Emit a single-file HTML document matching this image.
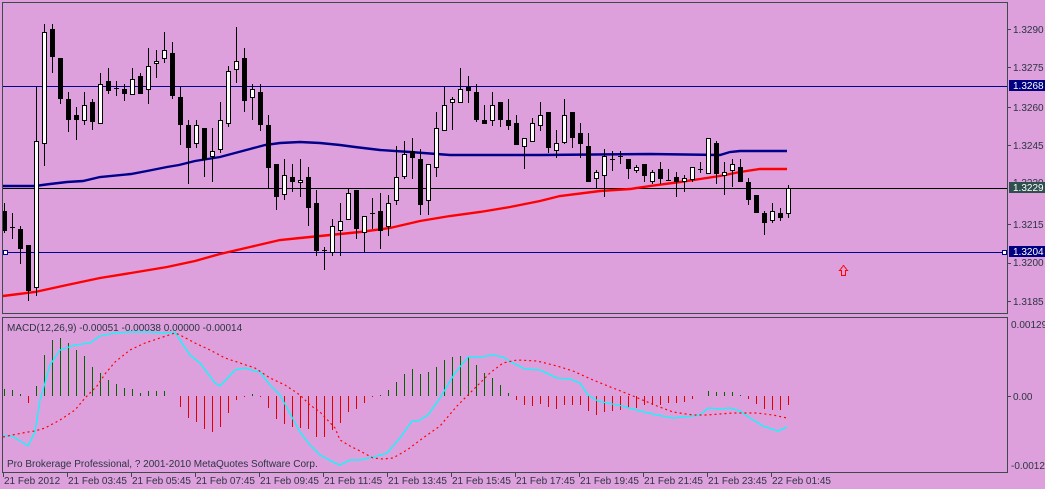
<!DOCTYPE html>
<html><head><meta charset="utf-8">
<style>
html,body{margin:0;padding:0;background:#DDA0DD;width:1045px;height:489px;overflow:hidden}
svg{display:block}
text{font-family:"Liberation Sans",sans-serif;font-size:10px;fill:#2b3540}
</style></head><body>
<svg id="s" width="1045" height="489" xmlns="http://www.w3.org/2000/svg" shape-rendering="crispEdges">
<rect width="1045" height="489" fill="#DDA0DD"/>
<g id="g"></g>
<rect x="2.5" y="2.5" width="1005" height="311" fill="none" stroke="#3c4a4a"/>
<rect x="2.5" y="317.5" width="1005" height="155" fill="none" stroke="#3c4a4a"/>
<g stroke="#3c4a4a">
<line x1="1008" y1="29.5" x2="1011" y2="29.5"/><line x1="1008" y1="67.5" x2="1011" y2="67.5"/>
<line x1="1008" y1="107.5" x2="1011" y2="107.5"/><line x1="1008" y1="145.5" x2="1011" y2="145.5"/>
<line x1="1008" y1="224.5" x2="1011" y2="224.5"/><line x1="1008" y1="263.5" x2="1011" y2="263.5"/>
<line x1="1008" y1="301.5" x2="1011" y2="301.5"/><line x1="1008" y1="396.5" x2="1011" y2="396.5"/>
</g>
<text x="1013" y="33">1.3290</text>
<text x="1013" y="71">1.3275</text>
<text x="1013" y="111">1.3260</text>
<text x="1013" y="149">1.3245</text>
<text x="1013" y="186">1.3230</text>
<text x="1013" y="228">1.3215</text>
<text x="1013" y="266">1.3200</text>
<text x="1013" y="305">1.3185</text>
<rect x="1009" y="80" width="36" height="11" fill="#000080"/>
<text x="1013" y="89" style="fill:#fff">1.3268</text>
<rect x="1009" y="182" width="36" height="11" fill="#2f4f4f"/>
<text x="1013" y="191" style="fill:#fff">1.3229</text>
<rect x="1009" y="246" width="36" height="11" fill="#000080"/>
<text x="1013" y="255" style="fill:#fff">1.3204</text>
<text x="1011" y="328">0.00129</text>
<text x="1013" y="400">0.00</text>
<text x="1011" y="469">-0.00125</text>
<text x="7" y="331">MACD(12,26,9) -0.00051 -0.00038 0.00000 -0.00014</text>
<text x="7" y="467">Pro Brokerage Professional, ? 2001-2010 MetaQuotes Software Corp.</text>
<g id="ax"></g>
</svg>
<script>
var NS="http://www.w3.org/2000/svg",g=document.getElementById('g'),ax=document.getElementById('ax');
function el(p,t,a){var e=document.createElementNS(NS,t);for(var k in a)e.setAttribute(k,a[k]);p.appendChild(e);return e;}
var lab=["21 Feb 2012","21 Feb 03:45","21 Feb 05:45","21 Feb 07:45","21 Feb 09:45","21 Feb 11:45","21 Feb 13:45","21 Feb 15:45","21 Feb 17:45","21 Feb 19:45","21 Feb 21:45","21 Feb 23:45","22 Feb 01:45"];
for(var i=0;i<13;i++){var x=3+64*i;el(ax,'line',{x1:x+.5,y1:473,x2:x+.5,y2:477,stroke:'#3c4a4a'});var t=el(ax,'text',{x:x+1,y:484});t.textContent=lab[i];}
el(g,'line',{x1:3,y1:86.5,x2:1007,y2:86.5,stroke:'#000090'});
el(g,'line',{x1:3,y1:188.5,x2:1007,y2:188.5,stroke:'#000'});
el(g,'line',{x1:3,y1:252.5,x2:1007,y2:252.5,stroke:'#000090'});
el(g,'rect',{x:3.5,y:250.5,width:4,height:4,fill:'#fff',stroke:'#000090'});
el(g,'rect',{x:1002.5,y:250.5,width:4,height:4,fill:'#fff',stroke:'#000090'});
el(g,'polyline',{points:"3,186 35,186 50,184 67,182 83,181 100,177 131,174 147,171 167,167 179,165 195,161 220,157 235,153 250,149 265,145 280,143 300,142 320,143 340,145 355,147 380,150 410,152 450,155 540,155 650,154 720,155 730,152 740,151 787,151",fill:'none',stroke:'#00008b','stroke-width':2.4,'shape-rendering':'auto'});
el(g,'polyline',{points:"3,296 35,292 67,285 100,278 131,273 167,267 195,261 220,254 250,247 280,240 300,238 330,235 360,232 390,228 420,221 450,216 480,212 510,207 540,201 560,196 600,191 630,189 650,186 680,182 700,179 720,176 740,172 760,169 787,169",fill:'none',stroke:'#f00','stroke-width':2.4,'shape-rendering':'auto'});
var C=[[211,230,203,232,'b'],[227,227,213,238,'d'],[229,248,226,263,'b'],[245,290,245,300,'b'],[141,287,87,295,'w'],[32,143,24,165,'w'],[29,56,24,72,'b'],[58,98,58,103,'b'],[99,119,92,131,'b'],[115,119,107,139,'b'],
[105,120,92,124,'w'],[102,121,99,129,'b'],[84,123,73,123,'w'],[81,90,68,93,'b'],[88,88,81,95,'d'],[89,93,84,100,'b'],[79,94,68,94,'w'],[76,93,73,93,'b'],[66,89,48,103,'w'],[61,63,50,77,'w'],
[50,58,32,62,'w'],[53,95,42,98,'b'],[97,124,87,144,'b'],[125,147,120,183,'b'],[125,143,120,147,'w'],[128,159,128,176,'b'],[151,156,128,181,'w'],[120,149,102,152,'w'],[71,123,66,126,'w'],[61,69,27,82,'w'],
[58,100,48,111,'b'],[89,97,84,119,'w'],[92,124,84,130,'b'],[125,167,115,188,'b'],[164,196,164,209,'b'],[175,194,159,199,'w'],[177,181,164,191,'b'],[180,182,159,196,'w'],[177,207,167,225,'b'],[203,250,190,255,'b'],
[250,250,247,269,'d'],[226,252,219,255,'w'],[221,230,203,255,'w'],[193,219,189,219,'w'],[190,228,190,238,'b'],[216,232,216,251,'w'],[213,213,198,228,'d'],[211,230,193,248,'b'],[203,226,195,235,'w'],[177,200,146,204,'w'],
[154,176,141,178,'w'],[151,157,138,178,'b'],[159,204,149,214,'b'],[164,200,164,214,'w'],[128,167,112,176,'w'],[105,130,87,130,'w'],[99,102,97,129,'w'],[89,102,68,102,'w'],[87,90,76,102,'b'],[92,119,84,121,'b'],
[120,123,105,123,'b'],[105,120,92,125,'w'],[102,119,102,126,'b'],[120,125,99,129,'b'],[123,144,115,144,'b'],[138,146,138,168,'w'],[123,141,118,141,'w'],[115,125,102,130,'w'],[112,147,112,152,'b'],[143,150,130,157,'w'],
[115,142,99,143,'w'],[112,137,112,147,'b'],[133,143,123,157,'b'],[146,181,133,181,'b'],[172,178,170,188,'w'],[156,175,149,196,'w'],[159,159,151,170,'d'],[156,156,151,163,'d'],[159,168,159,178,'b'],[167,170,165,172,'w'],
[164,175,164,181,'b'],[172,181,170,183,'w'],[169,178,162,183,'b'],[180,180,169,180,'d'],[177,181,172,196,'b'],[178,181,175,191,'w'],[167,179,167,181,'w'],[169,169,162,172,'d'],[138,173,138,173,'w'],[143,173,141,183,'b'],
[172,175,162,194,'w'],[164,170,159,186,'w'],[167,181,159,181,'b'],[182,199,178,204,'b'],[195,212,195,212,'b'],[213,222,211,234,'b'],[211,220,203,222,'w'],[213,217,208,220,'b'],[188,213,185,217,'w']];
for(var k=0;k<C.length;k++){var c=C[k],x=4+8*k;
 el(g,'line',{x1:x+.5,y1:c[2],x2:x+.5,y2:c[3]+1,stroke:'#000'});
 if(c[4]=='d'){el(g,'line',{x1:x-2,y1:c[0]+.5,x2:x+3,y2:c[0]+.5,stroke:'#000'});}
 else el(g,'rect',{x:x-1.5,y:c[0]+.5,width:4,height:Math.max(1,c[1]-c[0]),fill:c[4]=='w'?'#fff':'#000',stroke:'#000'});
}
var H=[389,390,394,403,386,355,340,338,343,350,356,367,373,380,384,388,389,393,391,391,391,396,407,418,422,429,432,427,413,400,397,394,397,408,419,424,427,428,429,437,437,430,423];
var Z=[282,272,254,236,231,216,192,168,153,168,162,147,126,117,114,117,141,165,180,201,225,245,260,263,257,266,272,260,262,262,280,290,281,280,275,270,270,262,260,260,256,256,251,242,235,219,222,222,222,231,242,257,272,275,275,260];
for(var i=0;i<Z.length;i++)H.push(Math.round(318+Z[i]/3));
for(var k=0;k<H.length;k++){var x=4+8*k,v=H[k];
 if(Math.abs(v-396)<1)continue;
 el(g,'line',{x1:x+.5,y1:396,x2:x+.5,y2:v,stroke:v<396?'#006400':'#e00000'});}
el(g,'polyline',{points:"3,436 12,436 28,446 35,432 40,400 43,390 50,365 60,350 75,345 90,343 100,336 115,333 130,332 150,332 165,333 175,332 180,340 190,355 200,363 215,383 220,386 235,370 245,368 255,371 260,372 270,385 280,395 300,432 310,445 320,455 335,463 340,465 350,460 360,460 377,456 387,453 400,438 412,421 418,421 428,415 440,398 455,373 468,357 480,357 493,355 503,357 513,363 525,369 540,370 557,378 570,379 580,383 588,395 598,401 607,403 622,406 640,411 657,415 673,418 693,416 700,415 708,408 720,409 730,408 740,411 750,418 763,426 778,431 787,427",fill:'none',stroke:'#00ffff','stroke-width':1.3,'shape-rendering':'auto'});
el(g,'polyline',{points:"3,437 12,435 28,432 35,431 45,428 60,420 75,410 85,398 97,386 105,374 115,362 130,350 145,343 160,338 175,333 180,335 195,343 210,350 225,358 240,363 255,368 270,378 285,385 300,395 310,405 320,412 335,428 340,440 350,446 360,451 373,458 383,459 393,458 407,450 423,438 440,426 457,406 473,390 490,373 503,363 517,360 537,361 557,366 573,371 593,380 613,388 633,396 657,406 673,412 693,415 707,415 733,413 757,413 773,415 787,418",fill:'none',stroke:'#ff0000','stroke-width':1.2,'stroke-dasharray':'2 3','shape-rendering':'auto'});
el(g,'path',{d:"M843.5,265.5 L839.5,270.5 L841.5,270.5 L841.5,275.5 L845.5,275.5 L845.5,270.5 L847.5,270.5 Z",fill:'none',stroke:'#f00'});
</script>
</body></html>
